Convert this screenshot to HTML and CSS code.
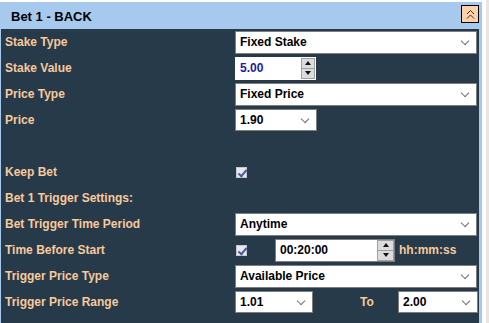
FILE: index.html
```html
<!DOCTYPE html>
<html>
<head>
<meta charset="utf-8">
<link rel="stylesheet" href="styles.css">
</head>
<body>
<div class="page">
  <div class="panel">
    <div class="header">
      <span class="title">Bet 1 - BACK</span>
      <span class="collapse">
        <svg width="11" height="11" viewBox="0 0 11 11"><path d="M2 5 L5.5 1.5 L9 5 M2 9.5 L5.5 6 L9 9.5" fill="none" stroke="#333" stroke-width="1"/></svg>
      </span>
    </div>
    <div class="body">
      <div class="row">
        <div class="label">Stake Type</div>
        <div class="ctl"><div class="select wide"><span>Fixed Stake</span><i class="chev"></i></div></div>
      </div>
      <div class="row">
        <div class="label">Stake Value</div>
        <div class="ctl"><div class="num"><span class="val blue">5.00</span><span class="spin"><b class="up"></b><b class="down"></b></span></div></div>
      </div>
      <div class="row">
        <div class="label">Price Type</div>
        <div class="ctl"><div class="select wide"><span>Fixed Price</span><i class="chev"></i></div></div>
      </div>
      <div class="row">
        <div class="label">Price</div>
        <div class="ctl"><div class="select small"><span>1.90</span><i class="chev"></i></div></div>
      </div>
      <div class="row"></div>
      <div class="row">
        <div class="label">Keep Bet</div>
        <div class="ctl"><span class="check"></span></div>
      </div>
      <div class="row">
        <div class="label">Bet 1 Trigger Settings:</div>
      </div>
      <div class="row">
        <div class="label">Bet Trigger Time Period</div>
        <div class="ctl"><div class="select wide"><span>Anytime</span><i class="chev"></i></div></div>
      </div>
      <div class="row">
        <div class="label">Time Before Start</div>
        <div class="ctl">
          <span class="check"></span>
          <div class="num time"><span class="val">00:20:00</span><span class="spin"><b class="up"></b><b class="down"></b></span></div>
          <span class="unit">hh:mm:ss</span>
        </div>
      </div>
      <div class="row">
        <div class="label">Trigger Price Type</div>
        <div class="ctl"><div class="select wide"><span>Available Price</span><i class="chev"></i></div></div>
      </div>
      <div class="row">
        <div class="label">Trigger Price Range</div>
        <div class="ctl">
          <div class="select range1"><span>1.01</span><i class="chev"></i></div>
          <span class="to">To</span>
          <div class="select range2"><span>2.00</span><i class="chev"></i></div>
        </div>
      </div>
    </div>
  </div>
  <div class="scroll"></div>
</div>
</body>
</html>
```

FILE: styles.css
```css
html, body {
  margin: 0;
  padding: 0;
  background: #ffffff;
  font-family: "Liberation Sans", Arial, sans-serif;
  font-weight: bold;
  font-size: 12px;
}
.page {
  display: flex;
  width: 489px;
  height: 323px;
  overflow: hidden;
}
.panel {
  width: 482px;
  margin-top: 2px;
  background: #a7c9ee;
  padding: 0 3px 0 1px;
  box-sizing: border-box;
  display: flex;
  flex-direction: column;
}
.scroll {
  width: 3px;
  margin-left: 4px;
  background: #e6e6e6;
}
.header {
  height: 27px;
  display: flex;
  align-items: center;
  justify-content: space-between;
  padding: 0 0 0 10px;
}
.title {
  font-size: 13px;
  color: #000;
  margin-top: 1px;
}
.collapse {
  width: 16px;
  height: 16px;
  border: 1px solid #000;
  background: #fdd1aa;
  display: flex;
  align-items: center;
  justify-content: center;
  margin-top: -3px;
}
.body {
  flex: 1;
  background: #273a4a;
}
.row {
  height: 26px;
  display: grid;
  grid-template-columns: 234px 1fr;
  align-items: center;
}
.label {
  color: #f8c99b;
  padding-left: 4px;
  white-space: nowrap;
}
.ctl {
  display: flex;
  align-items: center;
  height: 26px;
}
.select {
  height: 23px;
  box-sizing: border-box;
  background: #fff;
  border: 1px solid #7d7d7d;
  display: flex;
  align-items: center;
  justify-content: space-between;
  padding: 0 8px 0 4px;
  color: #000;
}
.wide { width: 242px; }
.small { width: 82px; height: 22px; }
.range1 { width: 78px; height: 22px; }
.range2 { width: 80px; height: 22px; }
.chev {
  width: 5px;
  height: 5px;
  border-right: 1px solid #707070;
  border-bottom: 1px solid #707070;
  transform: rotate(45deg) scaleX(1.05);
  margin-top: -3px;
}
.num {
  width: 81px;
  height: 23px;
  box-sizing: border-box;
  background: #fff;
  display: flex;
  align-items: center;
  justify-content: space-between;
  padding: 0 1px 0 5px;
}
.val { color: #000; }
.val.blue { color: #1d1d9a; }
.spin {
  width: 14px;
  height: 21px;
  display: flex;
  flex-direction: column;
  border: 1px solid #a0a0a0;
  box-sizing: border-box;
  background: #dcdcdc;
}
.spin b {
  flex: 1;
  display: flex;
  align-items: center;
  justify-content: center;
}
.spin b.up { border-bottom: 1px solid #a0a0a0; }
.spin b::after {
  content: "";
  width: 0;
  height: 0;
  border-left: 3px solid transparent;
  border-right: 3px solid transparent;
}
.spin b.up::after { border-bottom: 4px solid #111; }
.spin b.down::after { border-top: 4px solid #111; }
.check {
  width: 11px;
  height: 11px;
  box-sizing: border-box;
  margin-left: 1px;
  border: 1px solid #c8c8c8;
  background: #e6e8f0;
  position: relative;
}
.check::after {
  content: "";
  position: absolute;
  left: 3px;
  top: 0px;
  width: 3px;
  height: 7px;
  border-right: 2px solid #4a58a8;
  border-bottom: 2px solid #4a58a8;
  transform: rotate(40deg);
}
.time {
  width: 120px;
  margin-left: 28px;
  border: 1px solid #7d7d7d;
  padding: 0 0 0 4px;
  height: 23px;
}
.time .spin { width: 17px; height: 21px; }
.unit {
  color: #f8c99b;
  margin-left: 4px;
}
.to {
  color: #f8c99b;
  margin-left: 47px;
  width: 38px;
}
```
